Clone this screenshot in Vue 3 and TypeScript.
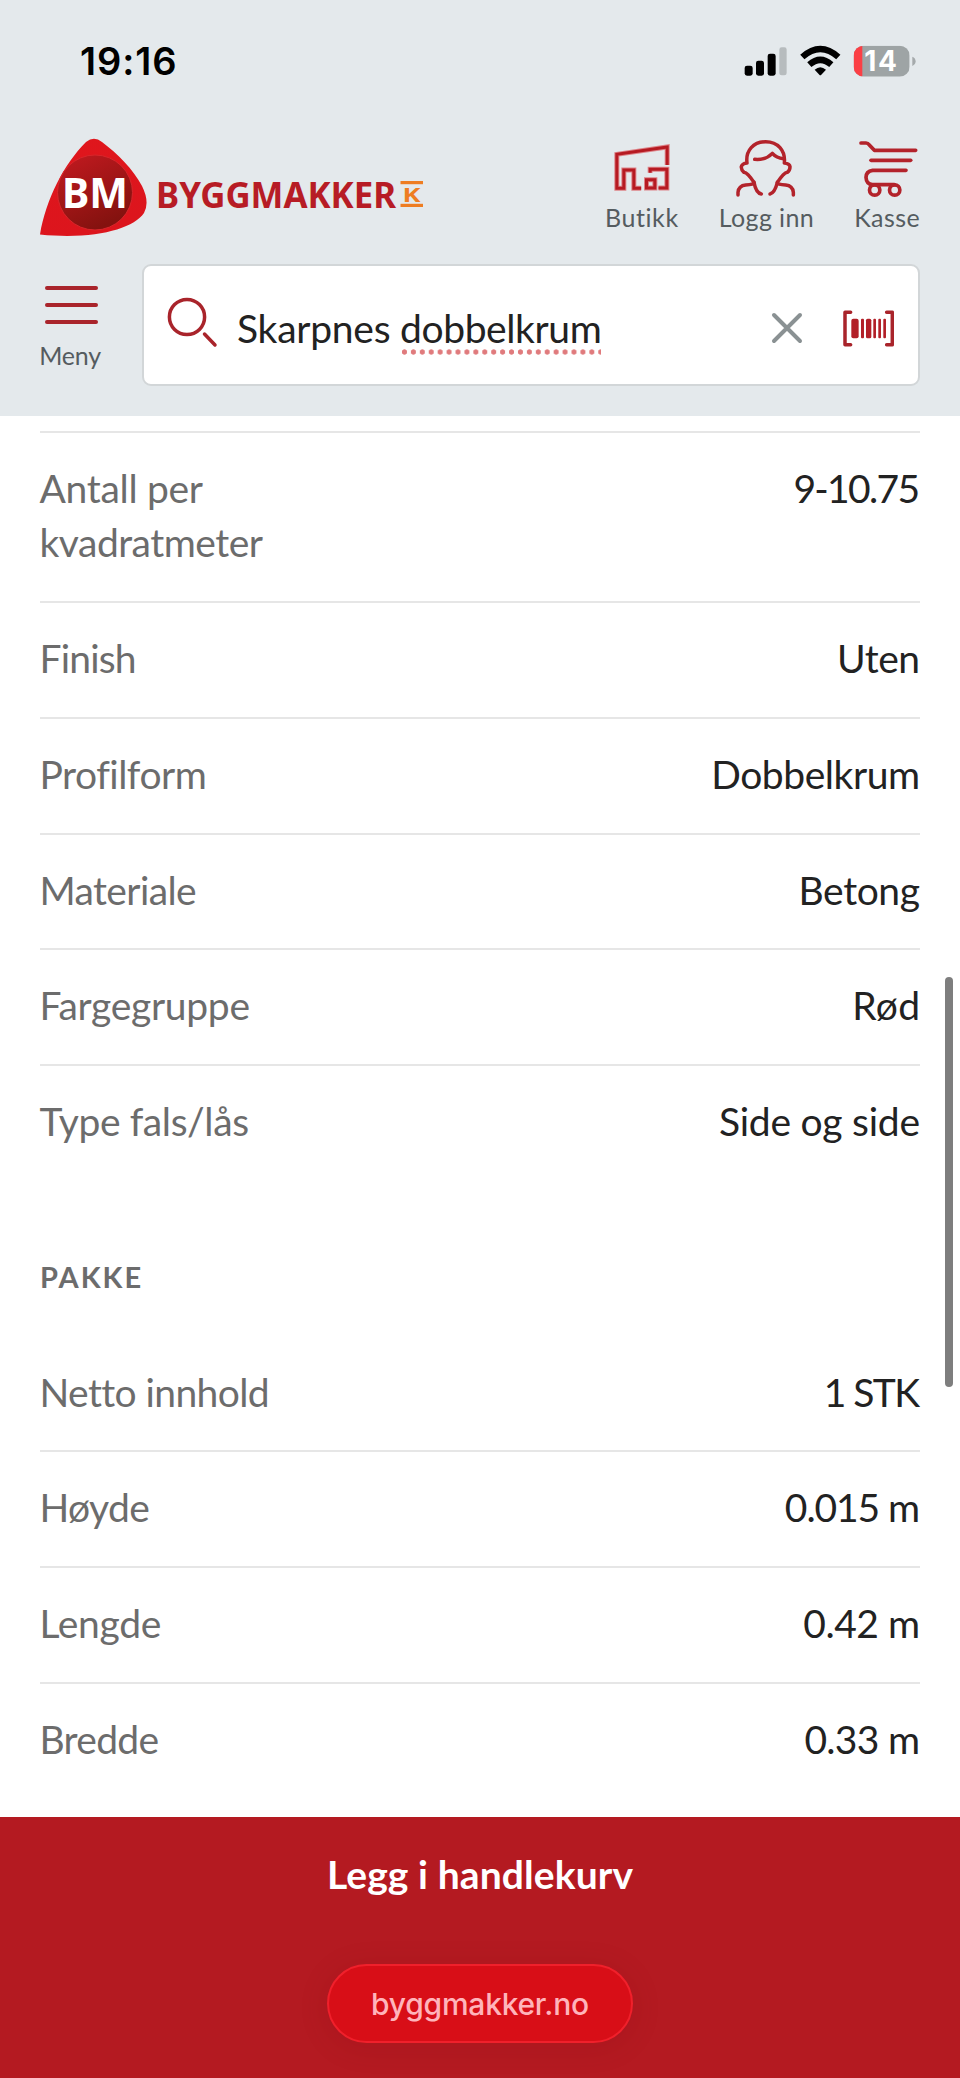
<script setup lang="ts">
interface Label {
  text: string
  spacing: number
}

interface Spec {
  label: Label[]
  value: Label
}

const t = (text: string, spacing = 0): Label => ({ text, spacing })

const general: Spec[] = [
  { label: [t('Antall per', -0.3), t('kvadratmeter', -0.5)], value: t('9-10.75', -1.7) },
  { label: [t('Finish', -0.8)], value: t('Uten', -0.5) },
  { label: [t('Profilform', -0.5)], value: t('Dobbelkrum', -0.45) },
  { label: [t('Materiale', -0.6)], value: t('Betong', -0.4) },
  { label: [t('Fargegruppe', -0.3)], value: t('Rød', 0.2) },
  { label: [t('Type fals/lås', -0.4)], value: t('Side og side', -0.25) }
]

const pakke: Spec[] = [
  { label: [t('Netto innhold', -0.6)], value: t('1 STK', -1.6) },
  { label: [t('Høyde', -0.6)], value: t('0.015 m', -1.1) },
  { label: [t('Lengde', -0.3)], value: t('0.42 m', -0.5) },
  { label: [t('Bredde', -0.7)], value: t('0.33 m', -0.7) }
]

const sections = [
  { title: '', rows: general },
  { title: 'PAKKE', rows: pakke }
]
</script>

<template>
  <div class="screen">
    <header class="header">
      <div class="status">
        <span class="clock">19:16</span>
        <svg class="status-icons" viewBox="190 70 520 102">
          <g fill="#000">
            <rect x="192" y="135" width="24" height="30" rx="7" />
            <rect x="226" y="120" width="24" height="45" rx="7" />
            <rect x="261" y="99" width="24" height="66" rx="7" />
          </g>
          <rect x="296" y="80" width="22" height="84" rx="7" fill="#b7bcbe" />
          <g fill="none" stroke="#000" stroke-width="19">
            <path d="M365 109 Q419 61 473 109" />
            <path d="M386 132 Q419 103 452 132" />
          </g>
          <path d="M402 147 Q419 132 436 147 L422 162 Q419 165 416 162 Z" />
          <clipPath id="cell"><rect x="519" y="75" width="168" height="93" rx="30" /></clipPath>
          <g clip-path="url(#cell)">
            <rect x="519" y="75" width="168" height="93" fill="#9ea4a5" />
            <rect x="519" y="75" width="26" height="93" fill="#fb3f45" />
          </g>
          <path d="M695 108 Q705 112 705 122 Q705 132 695 136 Z" fill="#a5aaac" />
          <text class="charge" x="551" y="152" textLength="98">14</text>
        </svg>
      </div>

      <div class="brand-row">
        <svg class="logo" viewBox="38 136 388 104">
          <defs>
            <linearGradient id="disc" x1="0" y1="0" x2="0.5" y2="1">
              <stop offset="0" stop-color="#c41a20" />
              <stop offset="1" stop-color="#84120f" />
            </linearGradient>
            <linearGradient id="shell" x1="0" y1="0" x2="0.3" y2="1">
              <stop offset="0" stop-color="#e0161c" />
              <stop offset="1" stop-color="#dc151d" />
            </linearGradient>
          </defs>
          <path
            d="M86 142 Q94 135.500 102 142 C118 154 133 169 142 186 Q150 202 144 213 C133 229 94 240 40 234.500 C46 199 64 164 86 142 Z"
            fill="url(#shell)"
          />
          <circle cx="95" cy="192.500" r="37.500" fill="url(#disc)" stroke="#d8262b" stroke-width="1" />
          <text class="bm" x="62" y="207.500" textLength="66" lengthAdjust="spacingAndGlyphs">BM</text>
          <text class="word" x="156" y="207.500" textLength="240" lengthAdjust="spacingAndGlyphs">BYGGMAKKER</text>
          <g fill="#ee7d22">
            <rect x="400.500" y="181" width="22.500" height="3.200" />
            <rect x="400.500" y="203.800" width="22.500" height="3.200" />
          </g>
          <text class="chain" x="402.500" y="201.500" textLength="18" lengthAdjust="spacingAndGlyphs">K</text>
        </svg>

        <nav class="actions">
          <a class="action butikk">
            <svg class="store" viewBox="67 50 180 185" fill="none">
              <g stroke="#dd8287" stroke-width="15">
                <path d="M233 134 V80 L82 102 V204 H103 V149 H133 V204 H155 M182 157 V147 H232 V203 H207 M171 178 H196 V203 H171 Z" />
              </g>
              <g stroke="#b61a22" stroke-width="9">
                <path d="M233 134 V80 L82 102 V204 H103 V149 H133 V204 H155 M182 157 V147 H232 V203 H207 M171 178 H196 V203 H171 Z" />
              </g>
            </svg>
            <span>Butikk</span>
          </a>
          <a class="action login">
            <svg class="glyph" viewBox="438 50 185 185" fill="none" stroke="#b3232b" stroke-width="10.500" stroke-linecap="round" stroke-linejoin="round">
              <path d="M444 224 V216 Q446 196 467 194 Q493 193 492 186 Q484 174 474 163 Q468 157 462 156 Q453 148 454 139 Q456 130 471 128 C466 90 491 64 527 64 C563 64 587 90 583 128 Q599 130 600 139 Q600 150 592 156 Q586 157 580 163 Q570 174 562 186 Q561 193 587 194 Q608 196 610 216 V224" />
              <path d="M494 117 Q527 120 547 99 Q559 113 581 115" />
              <path d="M492 186 Q498 218 514 221" />
              <path d="M562 186 Q554 218 540 221" />
            </svg>
            <span>Logg inn</span>
          </a>
          <a class="action kasse">
            <svg class="glyph" viewBox="799 50 185 185" fill="none" stroke="#b3232b" stroke-width="11" stroke-linecap="round" stroke-linejoin="round">
              <path d="M814 68 H829 Q835 68 839 74 L854 90 H978" />
              <path d="M844 120 H963" />
              <path d="M949 150 H849 Q829 153 829 171 Q830 191 848 193 H914" />
              <circle cx="855" cy="209" r="15.500" />
              <circle cx="915" cy="209" r="15.500" />
            </svg>
            <span>Kasse</span>
          </a>
        </nav>
      </div>

      <div class="search-row">
        <button class="menu" type="button">
          <span class="bars"><i></i><i></i><i></i></span>
          <span class="menu-label">Meny</span>
        </button>
        <div class="search">
          <svg class="lens" viewBox="166 296 52 52" fill="none" stroke="#a9242b" stroke-width="3.500" stroke-linecap="round">
            <circle cx="187" cy="317" r="17.600" />
            <path d="M204.500 334 L215 345" />
          </svg>
          <p class="query">Skarpnes <span class="misspelt">dobbelkrum</span></p>
          <svg class="clear" viewBox="0 0 32 32" stroke="#8a9193" stroke-width="4" stroke-linecap="round">
            <path d="M3 3 L29 29 M29 3 L3 29" />
          </svg>
          <svg class="barcode" viewBox="340 180 154 110">
            <path d="M363 187 H346 V284 H363 M471 187 H488 V284 H471" fill="none" stroke="#a9242b" stroke-width="10.500" stroke-linecap="round" stroke-linejoin="round" />
            <g fill="#b21f27">
              <rect x="365" y="206" width="22" height="59" rx="6" />
              <rect x="394" y="206" width="9" height="59" rx="3" />
              <rect x="409" y="206" width="16" height="59" rx="5" />
              <rect x="431" y="206" width="8" height="59" rx="3" />
              <rect x="446" y="206" width="8" height="59" rx="3" />
              <rect x="461" y="206" width="8" height="59" rx="3" />
            </g>
          </svg>
        </div>
      </div>
    </header>

    <main class="specs">
      <section v-for="section in sections" :key="section.title" class="section">
        <h2 v-if="section.title" class="title">{{ section.title }}</h2>
        <dl class="list">
          <div v-for="row in section.rows" :key="row.value.text" class="row">
            <dt class="name">
              <span
                v-for="line in row.label"
                :key="line.text"
                class="line"
                :style="{ letterSpacing: line.spacing + 'px' }"
              >{{ line.text }}</span>
            </dt>
            <dd
              class="value"
              :style="{ letterSpacing: row.value.spacing + 'px', marginRight: -row.value.spacing + 'px' }"
            >{{ row.value.text }}</dd>
          </div>
        </dl>
      </section>
    </main>

    <footer class="footer">
      <button class="buy" type="button">Legg i handlekurv</button>
      <div class="address">byggmakker.no</div>
    </footer>

    <div class="scrollbar"></div>
  </div>
</template>

<style>
body {
  background: #fff;
}
</style>

<style scoped>
.screen {
  position: relative;
  display: flex;
  flex-direction: column;
  width: 960px;
  height: 2078px;
  overflow: hidden;
  background: #fff;
  font-family: Lato, 'Noto Sans', sans-serif;
  font-variant-ligatures: none;
}

button {
  margin: 0;
  padding: 0;
  border: 0;
  background: none;
  font-family: inherit;
}

.header {
  flex: none;
  box-sizing: border-box;
  height: 416px;
  padding: 0 40px;
  background: #e4e9ec;
}

.status {
  display: flex;
  justify-content: space-between;
  align-items: center;
  height: 121px;
  padding-left: 40px;
  padding-right: 3px;
}

.clock {
  font-family: Inter, sans-serif;
  font-size: 38px;
  font-weight: 600;
  letter-spacing: 0.9px;
}

.status-icons {
  width: 173.3px;
  height: 34px;
}

.charge {
  fill: #fff;
  font-family: Inter, sans-serif;
  font-size: 84px;
  font-weight: 700;
}

.brand-row {
  display: flex;
  justify-content: space-between;
  align-items: flex-start;
  height: 128px;
  padding-top: 15px;
  box-sizing: border-box;
}

.logo {
  width: 388px;
  height: 104px;
  margin-left: -2px;
}

.bm {
  fill: #fff;
  font-family: 'Noto Sans', sans-serif;
  font-size: 42px;
  font-weight: 700;
}

.word {
  fill: #b71c25;
  font-family: 'Noto Sans', sans-serif;
  font-size: 35.5px;
  font-weight: 700;
}

.chain {
  fill: #ee7d22;
  font-family: 'Noto Sans', sans-serif;
  font-size: 20px;
  font-weight: 700;
}

.actions {
  display: flex;
  gap: 40px;
  padding-top: 1px;
}

.action {
  display: flex;
  flex-direction: column;
  align-items: center;
  gap: 3.5px;
  color: #555c60;
  font-size: 25px;
  line-height: 30px;
}

.butikk {
  letter-spacing: 0.6px;
}

.login,
.kasse {
  letter-spacing: 0.4px;
}

.glyph,
.store {
  width: 61.7px;
  height: 61.7px;
}

.glyph {
  overflow: visible;
}

.search-row {
  display: flex;
  gap: 39px;
  padding-top: 15px;
}

.menu {
  display: flex;
  flex-direction: column;
  align-items: center;
  width: 63px;
  padding-top: 22px;
}

.bars {
  display: flex;
  flex-direction: column;
  gap: 13.2px;
}

.bars i {
  width: 53px;
  height: 4px;
  border-radius: 2px;
  background: #a9242b;
}

.menu-label {
  margin: 16px 3px 0 0;
  color: #555c60;
  font-size: 25px;
  line-height: 30px;
  letter-spacing: -0.2px;
}

.search {
  flex: 1;
  display: flex;
  align-items: center;
  box-sizing: border-box;
  height: 122px;
  padding: 0 24px 0 22px;
  border: 2px solid #d2d6d8;
  border-radius: 9px;
  background: #fff;
}

.lens {
  width: 52px;
  height: 52px;
  margin-bottom: 6px;
}

.query {
  flex: 1;
  margin: 7px 0 0 19px;
  color: #222;
  font-size: 39px;
  line-height: 47px;
  letter-spacing: -0.25px;
  white-space: pre;
}

.misspelt {
  display: inline-block;
  height: 50px;
  margin-bottom: -3px;
  letter-spacing: -0.4px;
  background: radial-gradient(circle at 50% 50%, #e07b7d 2.3px, transparent 3px) 0 100% / 8.93px 6px repeat-x;
}

.clear {
  width: 32px;
  height: 32px;
  margin-top: 5px;
}

.barcode {
  width: 51.3px;
  height: 36.7px;
  margin: 7px 0 0 40px;
}

.specs {
  flex: 1;
  min-height: 0;
  padding: 15px 40px 0;
}

.list {
  margin: 0;
}

.row {
  display: flex;
  justify-content: space-between;
  padding: 28px 0 31.5px;
  border-top: 2px solid #e6e6e6;
  font-size: 39px;
  line-height: 54.3px;
}

.section + .section .row:first-child {
  border-top-color: transparent;
}

.name {
  margin-left: -0.5px;
  color: #6c6c6c;
}

.line {
  display: block;
}

.value {
  margin: 0;
  color: #222;
}

.title {
  margin: 79px 0 40.5px;
  color: #6c6c6c;
  font-size: 29px;
  font-weight: 700;
  line-height: 35px;
  letter-spacing: 2px;
}

.footer {
  flex: none;
  display: flex;
  flex-direction: column;
  align-items: center;
  box-sizing: border-box;
  height: 261px;
  padding-top: 34px;
  background: #b41a21;
}

.buy {
  color: #fff;
  font-size: 39px;
  font-weight: 700;
  line-height: 47px;
  letter-spacing: 0.1px;
}

.address {
  box-sizing: border-box;
  width: 306px;
  height: 79px;
  margin-top: 66px;
  border: 2px solid #f0202b;
  border-radius: 40px;
  background: #d80e17;
  box-shadow: 0 4px 28px rgba(130, 10, 15, 0.18);
  color: #ffb4bb;
  font-family: Inter, sans-serif;
  font-size: 30px;
  font-weight: 500;
  line-height: 77px;
  letter-spacing: -0.25px;
  text-align: center;
}

.scrollbar {
  position: absolute;
  top: 977px;
  right: 7px;
  width: 8px;
  height: 410px;
  border-radius: 4px;
  background: #7e7e7e;
}
</style>
